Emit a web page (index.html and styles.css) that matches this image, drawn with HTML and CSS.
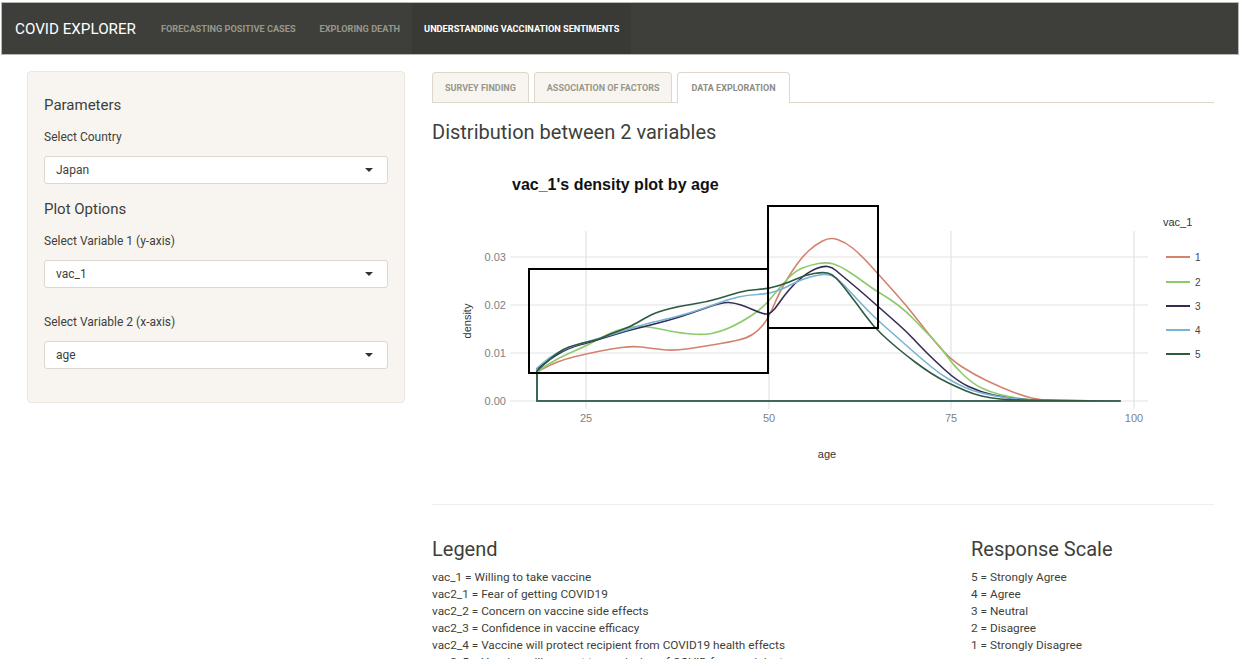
FILE: index.html
```html
<!DOCTYPE html>
<html lang="en">
<head>
<meta charset="utf-8">
<title>COVID Explorer</title>
<link rel="stylesheet" href="styles.css">
</head>
<body>
<nav class="navbar">
  <span class="brand">COVID EXPLORER</span>
  <a class="nav-link">FORECASTING POSITIVE CASES</a>
  <a class="nav-link">EXPLORING DEATH</a>
  <a class="nav-link active">UNDERSTANDING VACCINATION SENTIMENTS</a>
</nav>
<div class="page">
  <aside class="well">
    <h4 class="well-title">Parameters</h4>
    <div class="field-label">Select Country</div>
    <div class="select">Japan<span class="caret"></span></div>
    <h4 class="well-title second">Plot Options</h4>
    <div class="field-label">Select Variable 1 (y-axis)</div>
    <div class="select">vac_1<span class="caret"></span></div>
    <div class="field-label spaced">Select Variable 2 (x-axis)</div>
    <div class="select">age<span class="caret"></span></div>
  </aside>
  <main class="main">
    <ul class="tabs">
      <li class="tab">SURVEY FINDING</li>
      <li class="tab">ASSOCIATION OF FACTORS</li>
      <li class="tab active">DATA EXPLORATION</li>
    </ul>
    <h3 class="plot-heading">Distribution between 2 variables</h3>
    <svg class="chart" width="782" height="320" viewBox="432 150 782 320" xmlns="http://www.w3.org/2000/svg">
      <text class="c-title" x="512" y="191">vac_1's density plot by age</text>
      <g class="grid">
        <line x1="510" y1="258" x2="1148" y2="258"/>
        <line x1="510" y1="306" x2="1148" y2="306"/>
        <line x1="510" y1="354" x2="1148" y2="354"/>
        <line x1="510" y1="402" x2="1148" y2="402"/>
        <line x1="586" y1="232" x2="586" y2="410"/>
        <line x1="769" y1="232" x2="769" y2="410"/>
        <line x1="951" y1="232" x2="951" y2="410"/>
        <line x1="1134" y1="232" x2="1134" y2="410"/>
      </g>
      <g class="ticks-y">
        <text x="506" y="262">0.03</text>
        <text x="506" y="310">0.02</text>
        <text x="506" y="358">0.01</text>
        <text x="506" y="406">0.00</text>
      </g>
      <g class="ticks-x">
        <text x="586" y="423">25</text>
        <text x="769" y="423">50</text>
        <text x="951" y="423">75</text>
        <text x="1134" y="423">100</text>
      </g>
      <text class="axis-title" transform="translate(471 322) rotate(-90)">density</text>
      <text class="axis-title" x="827" y="459">age</text>
      <g class="curves">
        <path class="k1" d="M537,402 L537,373 L543.5,369.5 Q550,366 557.5,363 Q565,360 575.5,357.5 Q586,355 598,352.5 Q610,350 621.5,348.5 Q633,347 641.5,348 Q650,349 661.5,350.5 Q673,352 686.5,350 Q700,348 715,345.5 Q730,343 738.5,341 Q747,339 752.5,335.5 Q758,332 763,326 Q768,320 774,306 Q780,292 786,282 Q792,272 797.5,264.5 Q803,257 809,251.5 Q815,246 822.5,242 Q830,238 837.5,240.5 Q845,243 852.5,249 Q860,255 870,266 Q880,277 893.5,292 Q907,307 918.5,322 Q930,337 940,348.5 Q950,360 961.5,367.5 Q973,375 986.5,381.5 Q1000,388 1011.5,392.5 Q1023,397 1031.5,399 Q1040,401 1050,401.5 Q1060,402 1090,402 L1120,402 Z"/>
        <path class="k2" d="M537,402 L537,373 L543.5,368.5 Q550,364 557.5,360 Q565,356 575.5,351.5 Q586,347 593,343 Q600,339 608.5,335 Q617,331 626,329 Q635,327 642.5,327.5 Q650,328 657.5,329.5 Q665,331 672.5,332.5 Q680,334 691.5,335 Q703,336 711.5,334.5 Q720,333 730,328.5 Q740,324 751.5,316.5 Q763,309 771.5,298.5 Q780,288 787.5,280 Q795,272 802.5,269 Q810,266 818.5,264.5 Q827,263 833.5,265 Q840,267 848.5,272.5 Q857,278 865,284 Q873,290 881.5,295 Q890,300 898.5,306.5 Q907,313 915,321.5 Q923,330 931.5,338.5 Q940,347 946.5,356.5 Q953,366 963,375.5 Q973,385 981.5,389 Q990,393 1000,395.5 Q1010,398 1020,399.5 Q1030,401 1060,401.5 L1120,402 Z"/>
        <path class="k3" d="M537,402 L537,370 L543.5,365 Q550,360 556.5,356 Q563,352 569,349.5 Q575,347 581,345.5 Q587,344 598.5,340.5 Q610,337 620,334 Q630,331 642.5,328 Q655,325 667.5,321.5 Q680,318 690,314.5 Q700,311 711.5,307 Q723,303 729,303.5 Q735,304 741,306 Q747,308 752.5,310.5 Q758,313 763,314.5 Q768,316 771.5,313 Q775,310 779,304 Q783,298 789,291 Q795,284 802.5,278 Q810,272 816.5,269.5 Q823,267 827.5,267.5 Q832,268 836,271.5 Q840,275 848.5,282 Q857,289 865,296 Q873,303 881.5,310.5 Q890,318 898.5,325.5 Q907,333 913.5,340 Q920,347 926.5,353.5 Q933,360 945,371 Q957,382 968.5,387.5 Q980,393 993.5,396 Q1007,399 1018.5,400 Q1030,401 1060,401.5 L1120,402 Z"/>
        <path class="k4" d="M537,402 L537,369 L543.5,363.5 Q550,358 556.5,354.5 Q563,351 569,348.5 Q575,346 581,344.5 Q587,343 598.5,339.5 Q610,336 620,333 Q630,330 637.5,327.5 Q645,325 654,323 Q663,321 676.5,317.5 Q690,314 701.5,310 Q713,306 721.5,303 Q730,300 738.5,298 Q747,296 757.5,295.5 Q768,295 776.5,292 Q785,289 792.5,285 Q800,281 810,278 Q820,275 826,275.5 Q832,276 836,279 Q840,282 848.5,291 Q857,300 865,308.5 Q873,317 881.5,324.5 Q890,332 898.5,339.5 Q907,347 915,354 Q923,361 931.5,368 Q940,375 948.5,380 Q957,385 965,388.5 Q973,392 981.5,394 Q990,396 998.5,397.5 Q1007,399 1018.5,400 Q1030,401 1060,401.5 L1120,402 Z"/>
        <path class="k5" d="M537,402 L537,372 L543.5,366 Q550,360 556.5,355 Q563,350 569,348 Q575,346 581,344.5 Q587,343 593.5,341.5 Q600,340 605,337.5 Q610,335 620,331.5 Q630,328 637.5,323.5 Q645,319 651,316 Q657,313 668.5,310 Q680,307 693.5,305 Q707,303 718.5,299.5 Q730,296 738.5,293.5 Q747,291 757.5,290.5 Q768,290 779,286.5 Q790,283 797.5,279.5 Q805,276 814,274.5 Q823,273 827.5,274 Q832,275 836,279 Q840,283 848.5,294 Q857,305 865,316 Q873,327 881.5,335 Q890,343 898.5,350 Q907,357 915,363 Q923,369 931.5,374.5 Q940,380 948.5,384 Q957,388 965,391.5 Q973,395 981.5,397 Q990,399 1000,400 Q1010,401 1040,401.5 L1120,402 Z"/>
      </g>
      <g class="boxes">
        <rect x="529" y="270" width="239" height="104"/>
        <rect x="768" y="207" width="110" height="122"/>
      </g>
      <g class="legend">
        <text class="legend-title" x="1163" y="227">vac_1</text>
        <line class="k1" x1="1166" y1="258" x2="1190" y2="258"/>
        <line class="k2" x1="1166" y1="283" x2="1190" y2="283"/>
        <line class="k3" x1="1166" y1="307" x2="1190" y2="307"/>
        <line class="k4" x1="1166" y1="331" x2="1190" y2="331"/>
        <line class="k5" x1="1166" y1="355" x2="1190" y2="355"/>
        <text x="1195" y="262">1</text>
        <text x="1195" y="287">2</text>
        <text x="1195" y="311">3</text>
        <text x="1195" y="335">4</text>
        <text x="1195" y="359">5</text>
      </g>
    </svg>
    <hr class="divider">
    <div class="info">
      <section class="info-col">
        <h3 class="info-title">Legend</h3>
        <ul class="info-list">
          <li>vac_1 = Willing to take vaccine</li>
          <li>vac2_1 = Fear of getting COVID19</li>
          <li>vac2_2 = Concern on vaccine side effects</li>
          <li>vac2_3 = Confidence in vaccine efficacy</li>
          <li>vac2_4 = Vaccine will protect recipient from COVID19 health effects</li>
          <li>vac2_5 = Vaccine will prevent transmission of COVID from recipient</li>
        </ul>
      </section>
      <section class="info-col">
        <h3 class="info-title">Response Scale</h3>
        <ul class="info-list">
          <li>5 = Strongly Agree</li>
          <li>4 = Agree</li>
          <li>3 = Neutral</li>
          <li>2 = Disagree</li>
          <li>1 = Strongly Disagree</li>
        </ul>
      </section>
    </div>
  </main>
</div>
</body>
</html>
```
FILE: styles.css
```css
html, body {
  margin: 0;
  padding: 0;
  overflow: hidden;
}
body {
  font-family: Roboto, "Noto Sans", sans-serif;
  color: #3e3f3a;
  background: #ffffff;
}

/* Navbar */
.navbar {
  display: flex;
  align-items: stretch;
  height: 51px;
  margin: 2px 2px 0 1px;
  background: #3e3f3a;
  border: 1px solid #b8b8b4;
}
.brand {
  display: flex;
  align-items: center;
  padding: 0 13px;
  font-size: 15.2px;
  color: #ffffff;
}
.nav-link {
  display: flex;
  align-items: center;
  padding: 0 12px;
  font-size: 9.2px;
  font-weight: 700;
  color: #98978b;
  text-decoration: none;
}
.nav-link.active {
  color: #ffffff;
  background: #393a35;
}

/* Page layout */
.page {
  display: flex;
  align-items: flex-start;
  gap: 27px;
  padding: 16px 0 0 27px;
}

/* Sidebar well */
.well {
  box-sizing: border-box;
  width: 378px;
  height: 332px;
  padding: 24px 16px 0 16px;
  background: #f8f5f0;
  border: 1px solid #ece8e1;
  border-radius: 4px;
}
.well-title {
  margin: 0;
  font-size: 15px;
  font-weight: 400;
  line-height: 18px;
  color: #3e3f3a;
}
.well-title.second {
  margin-top: 16px;
}
.field-label {
  margin-top: 16px;
  font-size: 12px;
  line-height: 15px;
  color: #3e3f3a;
}
.field-label.spaced {
  margin-top: 27px;
}
.select {
  position: relative;
  box-sizing: border-box;
  height: 28px;
  margin-top: 11px;
  padding: 0 11px;
  font-size: 12px;
  line-height: 26px;
  color: #3e3f3a;
  background: #ffffff;
  border: 1px solid #dcd7cf;
  border-radius: 3px;
}
.caret {
  position: absolute;
  right: 14px;
  top: 11px;
  width: 0;
  height: 0;
  border-left: 4px solid transparent;
  border-right: 4px solid transparent;
  border-top: 4px solid #333333;
}

/* Main */
.main {
  width: 782px;
  padding-top: 1px;
}
.tabs {
  display: flex;
  gap: 5px;
  margin: 0;
  padding: 0;
  list-style: none;
  border-bottom: 1px solid #dfd7ca;
  height: 30px;
}
.tab {
  box-sizing: border-box;
  display: flex;
  align-items: center;
  height: 30px;
  padding: 0 12px;
  font-size: 9px;
  font-weight: 700;
  color: #98978b;
  background: #f8f5f0;
  border: 1px solid #dfd7ca;
  border-bottom: none;
  border-radius: 4px 4px 0 0;
}
.tab.active {
  height: 31px;
  padding: 0 13px;
  background: #ffffff;
  color: #8e8c84;
}
.plot-heading {
  margin: 18px 0 0 0;
  font-size: 20px;
  font-weight: 400;
  line-height: 22px;
  color: #3e3f3a;
}
.chart {
  display: block;
  margin-top: 6px;
  font-family: "Liberation Sans", Arial, sans-serif;
}
.c-title {
  font-size: 16px;
  font-weight: 700;
  fill: #111111;
}
.grid line {
  stroke: #e3e3e3;
  stroke-width: 1.2;
}
.ticks-y text {
  font-size: 11px;
  fill: #7f7f7f;
  text-anchor: end;
}
.ticks-x text {
  font-size: 11px;
  fill: #7f7f7f;
  text-anchor: middle;
}
.axis-title {
  font-size: 11px;
  fill: #333333;
  text-anchor: middle;
}
.curves path {
  fill: none;
  stroke-width: 1.6;
  stroke-linejoin: round;
}
.k1 { stroke: #d3826c; }
.k2 { stroke: #8ccb6c; }
.k3 { stroke: #352b55; }
.k4 { stroke: #78b3d3; }
.k5 { stroke: #2e5a40; }
.boxes rect {
  fill: none;
  stroke: #000000;
  stroke-width: 2;
}
.legend line {
  stroke-width: 2;
}
.legend text {
  font-size: 10px;
  fill: #444444;
}
.legend .legend-title {
  font-size: 11px;
  fill: #333333;
}

/* Divider and info */
.divider {
  margin: 35px 0 0 0;
  border: none;
  border-top: 1px solid #eeeeee;
  height: 0;
}
.info {
  display: grid;
  grid-template-columns: 1fr 243px;
  margin-top: 32px;
}
.info-title {
  margin: 0 0 8px 0;
  font-size: 20px;
  font-weight: 400;
  line-height: 24px;
  color: #3e3f3a;
}
.info-list {
  margin: 0;
  padding: 0;
  list-style: none;
  font-size: 11.8px;
  line-height: 17px;
  color: #3e3f3a;
}
```
